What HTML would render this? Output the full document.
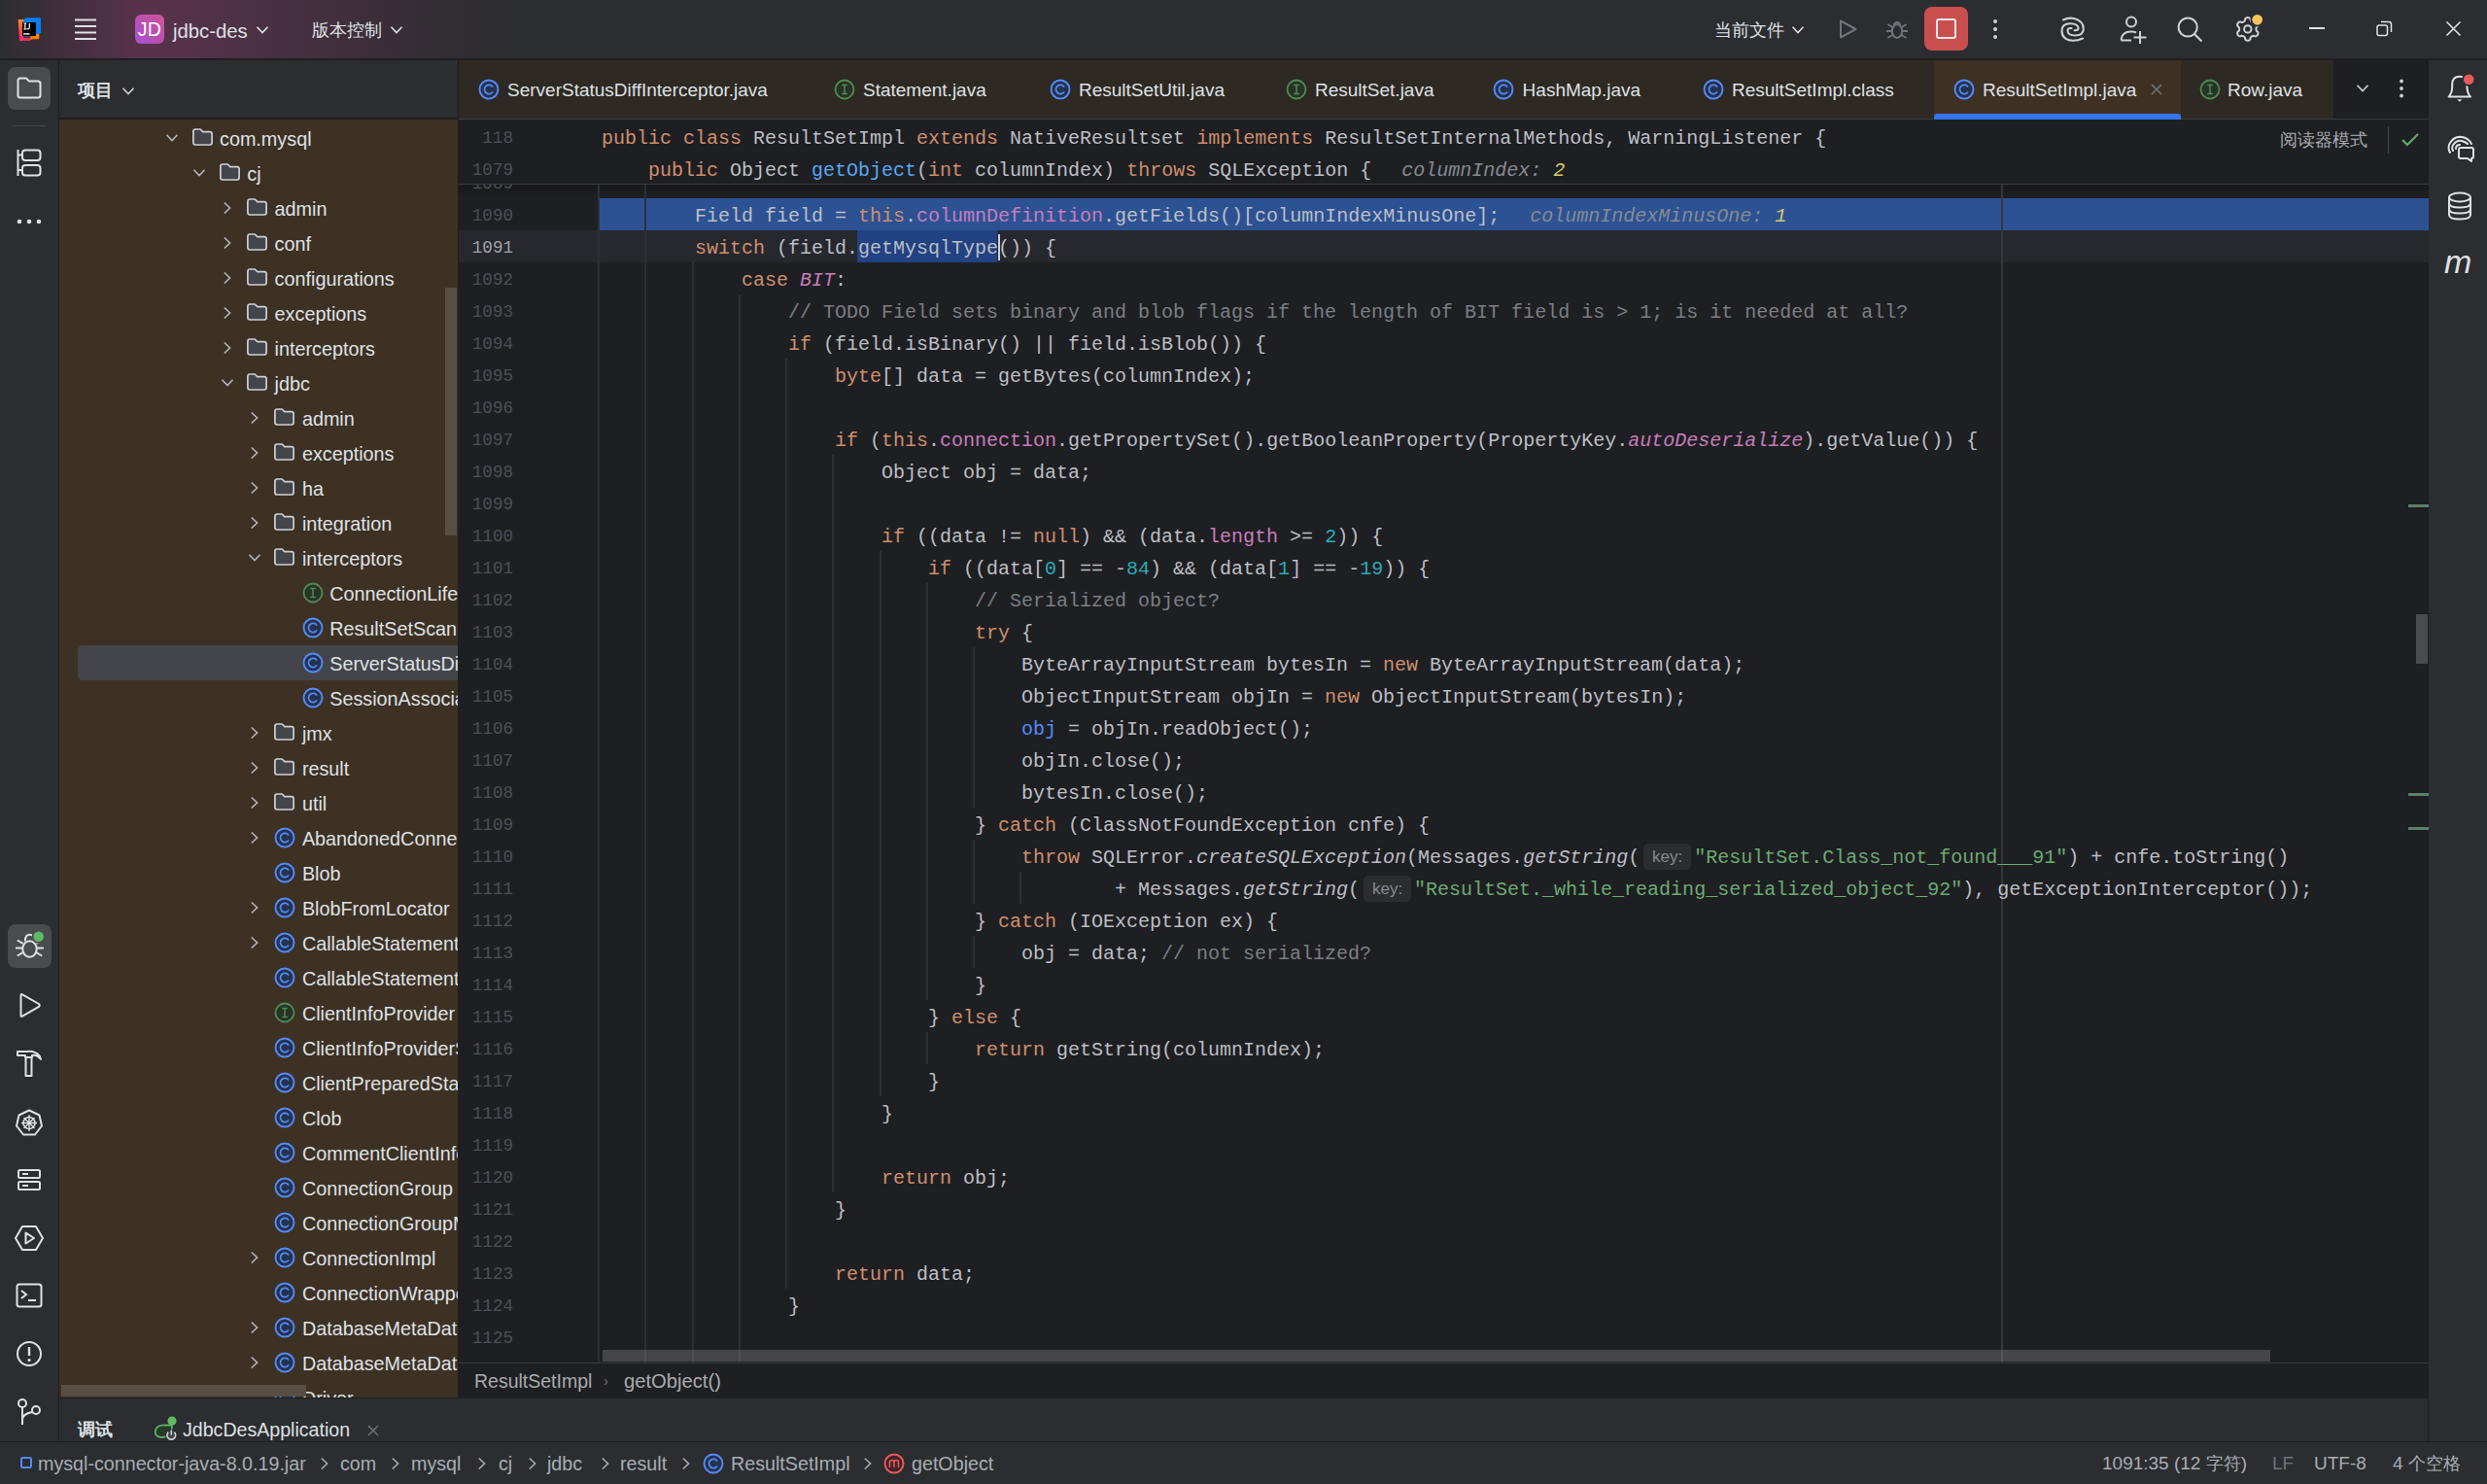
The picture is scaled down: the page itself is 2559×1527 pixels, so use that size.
<!DOCTYPE html><html><head><meta charset="utf-8"><style>
*{margin:0;padding:0;box-sizing:border-box}
html,body{width:2559px;height:1527px;overflow:hidden;background:#2b2d30}
svg{overflow:visible}
body{position:relative;font-family:"Liberation Sans",sans-serif}
.ui{font-family:"Liberation Sans",sans-serif;white-space:nowrap}
.cl{position:absolute;margin-left:1px;font-family:"Liberation Mono",monospace;font-size:20px;line-height:33px;height:33px;white-space:pre;color:#bcbec4;padding-top:2px}
.ln{position:absolute;left:472px;width:56px;text-align:right;font-family:"Liberation Mono",monospace;font-size:17.6px;line-height:33px;height:33px;color:#4b5059;padding-top:2px}
.ln.cur{color:#a1a3ab}
.k{color:#cf8e6d}.f{color:#c77dbb}.fi{color:#c77dbb;font-style:italic}.n{color:#2aacb8}.s{color:#6aab73}.c{color:#7a7e85}.m{color:#56a8f5}.i{font-style:italic}.b{color:#548af7}
.sel{}
.caret{display:inline-block;width:2px;height:27px;background:#ced0d6;vertical-align:-7px;margin-right:-2px}
.hint{display:inline-block;width:56px;height:27px;vertical-align:-7px;position:relative}
.hint span{position:absolute;left:4px;top:0;width:49px;height:27px;background:#2b2d30;border-radius:5px;font-family:"Liberation Sans",sans-serif;font-size:17px;line-height:27px;color:#878a90;text-align:center}
.inl{font-style:italic;color:#868a91;margin-left:31px}
.iv{color:#d5c86f}
</style></head><body><div style="position:absolute;left:0;top:0;width:2559px;height:60px;background:linear-gradient(90deg,#2c2d31 0px,#3f2f3b 60px,#58324a 145px,#55324a 190px,#4a3041 280px,#3c2e39 380px,#302d33 470px,#2b2d30 560px)"></div><div style="position:absolute;left:0;top:60px;width:2559px;height:2px;background:#1e1f22"></div><div style="position:absolute;left:472px;top:62px;width:2027px;height:1377px;background:#1e1f22"></div><div style="position:absolute;left:61px;top:123px;width:410px;height:1315px;background:#3d3124;overflow:hidden" ><div style="position:absolute;left:19px;top:541px;width:420px;height:36px;background:#43454a;border-radius:5px"></div><svg style="position:absolute;left:109.0px;top:14px" width="14" height="10" viewBox="0 0 14 10"><path d="M1.5 1.8 L7 7.6 L12.5 1.8" fill="none" stroke="#b4b6bb" stroke-width="1.6"/></svg><svg style="position:absolute;left:135.5px;top:8px" width="23" height="20" viewBox="0 0 23 20"><path d="M1.9 4.2 Q1.9 2 4.1 2 H9.2 L11.8 4.6 H18.9 Q21.1 4.6 21.1 6.8 V15.8 Q21.1 18 18.9 18 H4.1 Q1.9 18 1.9 15.8 Z" fill="#43454a" stroke="#ced0d6" stroke-width="1.7" stroke-linejoin="round"/></svg><div class="ui" style="position:absolute;left:165.0px;top:2px;font-size:19.8px;line-height:36px;color:#dfe1e5">com.mysql</div><svg style="position:absolute;left:137.3px;top:50px" width="14" height="10" viewBox="0 0 14 10"><path d="M1.5 1.8 L7 7.6 L12.5 1.8" fill="none" stroke="#b4b6bb" stroke-width="1.6"/></svg><svg style="position:absolute;left:163.8px;top:44px" width="23" height="20" viewBox="0 0 23 20"><path d="M1.9 4.2 Q1.9 2 4.1 2 H9.2 L11.8 4.6 H18.9 Q21.1 4.6 21.1 6.8 V15.8 Q21.1 18 18.9 18 H4.1 Q1.9 18 1.9 15.8 Z" fill="#43454a" stroke="#ced0d6" stroke-width="1.7" stroke-linejoin="round"/></svg><div class="ui" style="position:absolute;left:193.3px;top:38px;font-size:19.8px;line-height:36px;color:#dfe1e5">cj</div><svg style="position:absolute;left:167.6px;top:84px" width="10" height="14" viewBox="0 0 10 14"><path d="M1.8 1.5 L7.6 7 L1.8 12.5" fill="none" stroke="#b4b6bb" stroke-width="1.6"/></svg><svg style="position:absolute;left:192.1px;top:80px" width="23" height="20" viewBox="0 0 23 20"><path d="M1.9 4.2 Q1.9 2 4.1 2 H9.2 L11.8 4.6 H18.9 Q21.1 4.6 21.1 6.8 V15.8 Q21.1 18 18.9 18 H4.1 Q1.9 18 1.9 15.8 Z" fill="#43454a" stroke="#ced0d6" stroke-width="1.7" stroke-linejoin="round"/></svg><div class="ui" style="position:absolute;left:221.6px;top:74px;font-size:19.8px;line-height:36px;color:#dfe1e5">admin</div><svg style="position:absolute;left:167.6px;top:120px" width="10" height="14" viewBox="0 0 10 14"><path d="M1.8 1.5 L7.6 7 L1.8 12.5" fill="none" stroke="#b4b6bb" stroke-width="1.6"/></svg><svg style="position:absolute;left:192.1px;top:116px" width="23" height="20" viewBox="0 0 23 20"><path d="M1.9 4.2 Q1.9 2 4.1 2 H9.2 L11.8 4.6 H18.9 Q21.1 4.6 21.1 6.8 V15.8 Q21.1 18 18.9 18 H4.1 Q1.9 18 1.9 15.8 Z" fill="#43454a" stroke="#ced0d6" stroke-width="1.7" stroke-linejoin="round"/></svg><div class="ui" style="position:absolute;left:221.6px;top:110px;font-size:19.8px;line-height:36px;color:#dfe1e5">conf</div><svg style="position:absolute;left:167.6px;top:156px" width="10" height="14" viewBox="0 0 10 14"><path d="M1.8 1.5 L7.6 7 L1.8 12.5" fill="none" stroke="#b4b6bb" stroke-width="1.6"/></svg><svg style="position:absolute;left:192.1px;top:152px" width="23" height="20" viewBox="0 0 23 20"><path d="M1.9 4.2 Q1.9 2 4.1 2 H9.2 L11.8 4.6 H18.9 Q21.1 4.6 21.1 6.8 V15.8 Q21.1 18 18.9 18 H4.1 Q1.9 18 1.9 15.8 Z" fill="#43454a" stroke="#ced0d6" stroke-width="1.7" stroke-linejoin="round"/></svg><div class="ui" style="position:absolute;left:221.6px;top:146px;font-size:19.8px;line-height:36px;color:#dfe1e5">configurations</div><svg style="position:absolute;left:167.6px;top:192px" width="10" height="14" viewBox="0 0 10 14"><path d="M1.8 1.5 L7.6 7 L1.8 12.5" fill="none" stroke="#b4b6bb" stroke-width="1.6"/></svg><svg style="position:absolute;left:192.1px;top:188px" width="23" height="20" viewBox="0 0 23 20"><path d="M1.9 4.2 Q1.9 2 4.1 2 H9.2 L11.8 4.6 H18.9 Q21.1 4.6 21.1 6.8 V15.8 Q21.1 18 18.9 18 H4.1 Q1.9 18 1.9 15.8 Z" fill="#43454a" stroke="#ced0d6" stroke-width="1.7" stroke-linejoin="round"/></svg><div class="ui" style="position:absolute;left:221.6px;top:182px;font-size:19.8px;line-height:36px;color:#dfe1e5">exceptions</div><svg style="position:absolute;left:167.6px;top:228px" width="10" height="14" viewBox="0 0 10 14"><path d="M1.8 1.5 L7.6 7 L1.8 12.5" fill="none" stroke="#b4b6bb" stroke-width="1.6"/></svg><svg style="position:absolute;left:192.1px;top:224px" width="23" height="20" viewBox="0 0 23 20"><path d="M1.9 4.2 Q1.9 2 4.1 2 H9.2 L11.8 4.6 H18.9 Q21.1 4.6 21.1 6.8 V15.8 Q21.1 18 18.9 18 H4.1 Q1.9 18 1.9 15.8 Z" fill="#43454a" stroke="#ced0d6" stroke-width="1.7" stroke-linejoin="round"/></svg><div class="ui" style="position:absolute;left:221.6px;top:218px;font-size:19.8px;line-height:36px;color:#dfe1e5">interceptors</div><svg style="position:absolute;left:165.6px;top:266px" width="14" height="10" viewBox="0 0 14 10"><path d="M1.5 1.8 L7 7.6 L12.5 1.8" fill="none" stroke="#b4b6bb" stroke-width="1.6"/></svg><svg style="position:absolute;left:192.1px;top:260px" width="23" height="20" viewBox="0 0 23 20"><path d="M1.9 4.2 Q1.9 2 4.1 2 H9.2 L11.8 4.6 H18.9 Q21.1 4.6 21.1 6.8 V15.8 Q21.1 18 18.9 18 H4.1 Q1.9 18 1.9 15.8 Z" fill="#43454a" stroke="#ced0d6" stroke-width="1.7" stroke-linejoin="round"/></svg><div class="ui" style="position:absolute;left:221.6px;top:254px;font-size:19.8px;line-height:36px;color:#dfe1e5">jdbc</div><svg style="position:absolute;left:195.9px;top:300px" width="10" height="14" viewBox="0 0 10 14"><path d="M1.8 1.5 L7.6 7 L1.8 12.5" fill="none" stroke="#b4b6bb" stroke-width="1.6"/></svg><svg style="position:absolute;left:220.4px;top:296px" width="23" height="20" viewBox="0 0 23 20"><path d="M1.9 4.2 Q1.9 2 4.1 2 H9.2 L11.8 4.6 H18.9 Q21.1 4.6 21.1 6.8 V15.8 Q21.1 18 18.9 18 H4.1 Q1.9 18 1.9 15.8 Z" fill="#43454a" stroke="#ced0d6" stroke-width="1.7" stroke-linejoin="round"/></svg><div class="ui" style="position:absolute;left:249.9px;top:290px;font-size:19.8px;line-height:36px;color:#dfe1e5">admin</div><svg style="position:absolute;left:195.9px;top:336px" width="10" height="14" viewBox="0 0 10 14"><path d="M1.8 1.5 L7.6 7 L1.8 12.5" fill="none" stroke="#b4b6bb" stroke-width="1.6"/></svg><svg style="position:absolute;left:220.4px;top:332px" width="23" height="20" viewBox="0 0 23 20"><path d="M1.9 4.2 Q1.9 2 4.1 2 H9.2 L11.8 4.6 H18.9 Q21.1 4.6 21.1 6.8 V15.8 Q21.1 18 18.9 18 H4.1 Q1.9 18 1.9 15.8 Z" fill="#43454a" stroke="#ced0d6" stroke-width="1.7" stroke-linejoin="round"/></svg><div class="ui" style="position:absolute;left:249.9px;top:326px;font-size:19.8px;line-height:36px;color:#dfe1e5">exceptions</div><svg style="position:absolute;left:195.9px;top:372px" width="10" height="14" viewBox="0 0 10 14"><path d="M1.8 1.5 L7.6 7 L1.8 12.5" fill="none" stroke="#b4b6bb" stroke-width="1.6"/></svg><svg style="position:absolute;left:220.4px;top:368px" width="23" height="20" viewBox="0 0 23 20"><path d="M1.9 4.2 Q1.9 2 4.1 2 H9.2 L11.8 4.6 H18.9 Q21.1 4.6 21.1 6.8 V15.8 Q21.1 18 18.9 18 H4.1 Q1.9 18 1.9 15.8 Z" fill="#43454a" stroke="#ced0d6" stroke-width="1.7" stroke-linejoin="round"/></svg><div class="ui" style="position:absolute;left:249.9px;top:362px;font-size:19.8px;line-height:36px;color:#dfe1e5">ha</div><svg style="position:absolute;left:195.9px;top:408px" width="10" height="14" viewBox="0 0 10 14"><path d="M1.8 1.5 L7.6 7 L1.8 12.5" fill="none" stroke="#b4b6bb" stroke-width="1.6"/></svg><svg style="position:absolute;left:220.4px;top:404px" width="23" height="20" viewBox="0 0 23 20"><path d="M1.9 4.2 Q1.9 2 4.1 2 H9.2 L11.8 4.6 H18.9 Q21.1 4.6 21.1 6.8 V15.8 Q21.1 18 18.9 18 H4.1 Q1.9 18 1.9 15.8 Z" fill="#43454a" stroke="#ced0d6" stroke-width="1.7" stroke-linejoin="round"/></svg><div class="ui" style="position:absolute;left:249.9px;top:398px;font-size:19.8px;line-height:36px;color:#dfe1e5">integration</div><svg style="position:absolute;left:193.9px;top:446px" width="14" height="10" viewBox="0 0 14 10"><path d="M1.5 1.8 L7 7.6 L12.5 1.8" fill="none" stroke="#b4b6bb" stroke-width="1.6"/></svg><svg style="position:absolute;left:220.4px;top:440px" width="23" height="20" viewBox="0 0 23 20"><path d="M1.9 4.2 Q1.9 2 4.1 2 H9.2 L11.8 4.6 H18.9 Q21.1 4.6 21.1 6.8 V15.8 Q21.1 18 18.9 18 H4.1 Q1.9 18 1.9 15.8 Z" fill="#43454a" stroke="#ced0d6" stroke-width="1.7" stroke-linejoin="round"/></svg><div class="ui" style="position:absolute;left:249.9px;top:434px;font-size:19.8px;line-height:36px;color:#dfe1e5">interceptors</div><svg style="position:absolute;left:249.7px;top:476px" width="22" height="22" viewBox="0 0 22 22"><circle cx="11" cy="11" r="9.5" fill="#273325" stroke="#4f8b53" stroke-width="1.8"/><path d="M8.2 6.5 H13.8 M11 6.5 V15.5 M8.2 15.5 H13.8" fill="none" stroke="#4f8b53" stroke-width="1.5"/></svg><div class="ui" style="position:absolute;left:278.2px;top:470px;font-size:19.8px;line-height:36px;color:#dfe1e5">ConnectionLifecycleInterceptor</div><svg style="position:absolute;left:249.7px;top:512px" width="22" height="22" viewBox="0 0 22 22"><circle cx="11" cy="11" r="9.5" fill="#25324d" stroke="#548af7" stroke-width="1.9"/><path d="M15 8.6 A4.6 4.6 0 1 0 15 13.4" fill="none" stroke="#548af7" stroke-width="1.7"/></svg><div class="ui" style="position:absolute;left:278.2px;top:506px;font-size:19.8px;line-height:36px;color:#dfe1e5">ResultSetScannerInterceptor</div><svg style="position:absolute;left:249.7px;top:548px" width="22" height="22" viewBox="0 0 22 22"><circle cx="11" cy="11" r="9.5" fill="#25324d" stroke="#548af7" stroke-width="1.9"/><path d="M15 8.6 A4.6 4.6 0 1 0 15 13.4" fill="none" stroke="#548af7" stroke-width="1.7"/></svg><div class="ui" style="position:absolute;left:278.2px;top:542px;font-size:19.8px;line-height:36px;color:#dfe1e5">ServerStatusDiffInterceptor</div><svg style="position:absolute;left:249.7px;top:584px" width="22" height="22" viewBox="0 0 22 22"><circle cx="11" cy="11" r="9.5" fill="#25324d" stroke="#548af7" stroke-width="1.9"/><path d="M15 8.6 A4.6 4.6 0 1 0 15 13.4" fill="none" stroke="#548af7" stroke-width="1.7"/></svg><div class="ui" style="position:absolute;left:278.2px;top:578px;font-size:19.8px;line-height:36px;color:#dfe1e5">SessionAssociationInterceptor</div><svg style="position:absolute;left:195.9px;top:624px" width="10" height="14" viewBox="0 0 10 14"><path d="M1.8 1.5 L7.6 7 L1.8 12.5" fill="none" stroke="#b4b6bb" stroke-width="1.6"/></svg><svg style="position:absolute;left:220.4px;top:620px" width="23" height="20" viewBox="0 0 23 20"><path d="M1.9 4.2 Q1.9 2 4.1 2 H9.2 L11.8 4.6 H18.9 Q21.1 4.6 21.1 6.8 V15.8 Q21.1 18 18.9 18 H4.1 Q1.9 18 1.9 15.8 Z" fill="#43454a" stroke="#ced0d6" stroke-width="1.7" stroke-linejoin="round"/></svg><div class="ui" style="position:absolute;left:249.9px;top:614px;font-size:19.8px;line-height:36px;color:#dfe1e5">jmx</div><svg style="position:absolute;left:195.9px;top:660px" width="10" height="14" viewBox="0 0 10 14"><path d="M1.8 1.5 L7.6 7 L1.8 12.5" fill="none" stroke="#b4b6bb" stroke-width="1.6"/></svg><svg style="position:absolute;left:220.4px;top:656px" width="23" height="20" viewBox="0 0 23 20"><path d="M1.9 4.2 Q1.9 2 4.1 2 H9.2 L11.8 4.6 H18.9 Q21.1 4.6 21.1 6.8 V15.8 Q21.1 18 18.9 18 H4.1 Q1.9 18 1.9 15.8 Z" fill="#43454a" stroke="#ced0d6" stroke-width="1.7" stroke-linejoin="round"/></svg><div class="ui" style="position:absolute;left:249.9px;top:650px;font-size:19.8px;line-height:36px;color:#dfe1e5">result</div><svg style="position:absolute;left:195.9px;top:696px" width="10" height="14" viewBox="0 0 10 14"><path d="M1.8 1.5 L7.6 7 L1.8 12.5" fill="none" stroke="#b4b6bb" stroke-width="1.6"/></svg><svg style="position:absolute;left:220.4px;top:692px" width="23" height="20" viewBox="0 0 23 20"><path d="M1.9 4.2 Q1.9 2 4.1 2 H9.2 L11.8 4.6 H18.9 Q21.1 4.6 21.1 6.8 V15.8 Q21.1 18 18.9 18 H4.1 Q1.9 18 1.9 15.8 Z" fill="#43454a" stroke="#ced0d6" stroke-width="1.7" stroke-linejoin="round"/></svg><div class="ui" style="position:absolute;left:249.9px;top:686px;font-size:19.8px;line-height:36px;color:#dfe1e5">util</div><svg style="position:absolute;left:195.9px;top:732px" width="10" height="14" viewBox="0 0 10 14"><path d="M1.8 1.5 L7.6 7 L1.8 12.5" fill="none" stroke="#b4b6bb" stroke-width="1.6"/></svg><svg style="position:absolute;left:221.4px;top:728px" width="22" height="22" viewBox="0 0 22 22"><circle cx="11" cy="11" r="9.5" fill="#25324d" stroke="#548af7" stroke-width="1.9"/><path d="M15 8.6 A4.6 4.6 0 1 0 15 13.4" fill="none" stroke="#548af7" stroke-width="1.7"/></svg><div class="ui" style="position:absolute;left:249.9px;top:722px;font-size:19.8px;line-height:36px;color:#dfe1e5">AbandonedConnectionCleanupThread</div><svg style="position:absolute;left:221.4px;top:764px" width="22" height="22" viewBox="0 0 22 22"><circle cx="11" cy="11" r="9.5" fill="#25324d" stroke="#548af7" stroke-width="1.9"/><path d="M15 8.6 A4.6 4.6 0 1 0 15 13.4" fill="none" stroke="#548af7" stroke-width="1.7"/></svg><div class="ui" style="position:absolute;left:249.9px;top:758px;font-size:19.8px;line-height:36px;color:#dfe1e5">Blob</div><svg style="position:absolute;left:195.9px;top:804px" width="10" height="14" viewBox="0 0 10 14"><path d="M1.8 1.5 L7.6 7 L1.8 12.5" fill="none" stroke="#b4b6bb" stroke-width="1.6"/></svg><svg style="position:absolute;left:221.4px;top:800px" width="22" height="22" viewBox="0 0 22 22"><circle cx="11" cy="11" r="9.5" fill="#25324d" stroke="#548af7" stroke-width="1.9"/><path d="M15 8.6 A4.6 4.6 0 1 0 15 13.4" fill="none" stroke="#548af7" stroke-width="1.7"/></svg><div class="ui" style="position:absolute;left:249.9px;top:794px;font-size:19.8px;line-height:36px;color:#dfe1e5">BlobFromLocator</div><svg style="position:absolute;left:195.9px;top:840px" width="10" height="14" viewBox="0 0 10 14"><path d="M1.8 1.5 L7.6 7 L1.8 12.5" fill="none" stroke="#b4b6bb" stroke-width="1.6"/></svg><svg style="position:absolute;left:221.4px;top:836px" width="22" height="22" viewBox="0 0 22 22"><circle cx="11" cy="11" r="9.5" fill="#25324d" stroke="#548af7" stroke-width="1.9"/><path d="M15 8.6 A4.6 4.6 0 1 0 15 13.4" fill="none" stroke="#548af7" stroke-width="1.7"/></svg><div class="ui" style="position:absolute;left:249.9px;top:830px;font-size:19.8px;line-height:36px;color:#dfe1e5">CallableStatement</div><svg style="position:absolute;left:221.4px;top:872px" width="22" height="22" viewBox="0 0 22 22"><circle cx="11" cy="11" r="9.5" fill="#25324d" stroke="#548af7" stroke-width="1.9"/><path d="M15 8.6 A4.6 4.6 0 1 0 15 13.4" fill="none" stroke="#548af7" stroke-width="1.7"/></svg><div class="ui" style="position:absolute;left:249.9px;top:866px;font-size:19.8px;line-height:36px;color:#dfe1e5">CallableStatementWrapper</div><svg style="position:absolute;left:221.4px;top:908px" width="22" height="22" viewBox="0 0 22 22"><circle cx="11" cy="11" r="9.5" fill="#273325" stroke="#4f8b53" stroke-width="1.8"/><path d="M8.2 6.5 H13.8 M11 6.5 V15.5 M8.2 15.5 H13.8" fill="none" stroke="#4f8b53" stroke-width="1.5"/></svg><div class="ui" style="position:absolute;left:249.9px;top:902px;font-size:19.8px;line-height:36px;color:#dfe1e5">ClientInfoProvider</div><svg style="position:absolute;left:221.4px;top:944px" width="22" height="22" viewBox="0 0 22 22"><circle cx="11" cy="11" r="9.5" fill="#25324d" stroke="#548af7" stroke-width="1.9"/><path d="M15 8.6 A4.6 4.6 0 1 0 15 13.4" fill="none" stroke="#548af7" stroke-width="1.7"/></svg><div class="ui" style="position:absolute;left:249.9px;top:938px;font-size:19.8px;line-height:36px;color:#dfe1e5">ClientInfoProviderSP</div><svg style="position:absolute;left:221.4px;top:980px" width="22" height="22" viewBox="0 0 22 22"><circle cx="11" cy="11" r="9.5" fill="#25324d" stroke="#548af7" stroke-width="1.9"/><path d="M15 8.6 A4.6 4.6 0 1 0 15 13.4" fill="none" stroke="#548af7" stroke-width="1.7"/></svg><div class="ui" style="position:absolute;left:249.9px;top:974px;font-size:19.8px;line-height:36px;color:#dfe1e5">ClientPreparedStatement</div><svg style="position:absolute;left:221.4px;top:1016px" width="22" height="22" viewBox="0 0 22 22"><circle cx="11" cy="11" r="9.5" fill="#25324d" stroke="#548af7" stroke-width="1.9"/><path d="M15 8.6 A4.6 4.6 0 1 0 15 13.4" fill="none" stroke="#548af7" stroke-width="1.7"/></svg><div class="ui" style="position:absolute;left:249.9px;top:1010px;font-size:19.8px;line-height:36px;color:#dfe1e5">Clob</div><svg style="position:absolute;left:221.4px;top:1052px" width="22" height="22" viewBox="0 0 22 22"><circle cx="11" cy="11" r="9.5" fill="#25324d" stroke="#548af7" stroke-width="1.9"/><path d="M15 8.6 A4.6 4.6 0 1 0 15 13.4" fill="none" stroke="#548af7" stroke-width="1.7"/></svg><div class="ui" style="position:absolute;left:249.9px;top:1046px;font-size:19.8px;line-height:36px;color:#dfe1e5">CommentClientInfoProvider</div><svg style="position:absolute;left:221.4px;top:1088px" width="22" height="22" viewBox="0 0 22 22"><circle cx="11" cy="11" r="9.5" fill="#25324d" stroke="#548af7" stroke-width="1.9"/><path d="M15 8.6 A4.6 4.6 0 1 0 15 13.4" fill="none" stroke="#548af7" stroke-width="1.7"/></svg><div class="ui" style="position:absolute;left:249.9px;top:1082px;font-size:19.8px;line-height:36px;color:#dfe1e5">ConnectionGroup</div><svg style="position:absolute;left:221.4px;top:1124px" width="22" height="22" viewBox="0 0 22 22"><circle cx="11" cy="11" r="9.5" fill="#25324d" stroke="#548af7" stroke-width="1.9"/><path d="M15 8.6 A4.6 4.6 0 1 0 15 13.4" fill="none" stroke="#548af7" stroke-width="1.7"/></svg><div class="ui" style="position:absolute;left:249.9px;top:1118px;font-size:19.8px;line-height:36px;color:#dfe1e5">ConnectionGroupManager</div><svg style="position:absolute;left:195.9px;top:1164px" width="10" height="14" viewBox="0 0 10 14"><path d="M1.8 1.5 L7.6 7 L1.8 12.5" fill="none" stroke="#b4b6bb" stroke-width="1.6"/></svg><svg style="position:absolute;left:221.4px;top:1160px" width="22" height="22" viewBox="0 0 22 22"><circle cx="11" cy="11" r="9.5" fill="#25324d" stroke="#548af7" stroke-width="1.9"/><path d="M15 8.6 A4.6 4.6 0 1 0 15 13.4" fill="none" stroke="#548af7" stroke-width="1.7"/></svg><div class="ui" style="position:absolute;left:249.9px;top:1154px;font-size:19.8px;line-height:36px;color:#dfe1e5">ConnectionImpl</div><svg style="position:absolute;left:221.4px;top:1196px" width="22" height="22" viewBox="0 0 22 22"><circle cx="11" cy="11" r="9.5" fill="#25324d" stroke="#548af7" stroke-width="1.9"/><path d="M15 8.6 A4.6 4.6 0 1 0 15 13.4" fill="none" stroke="#548af7" stroke-width="1.7"/></svg><div class="ui" style="position:absolute;left:249.9px;top:1190px;font-size:19.8px;line-height:36px;color:#dfe1e5">ConnectionWrapper</div><svg style="position:absolute;left:195.9px;top:1236px" width="10" height="14" viewBox="0 0 10 14"><path d="M1.8 1.5 L7.6 7 L1.8 12.5" fill="none" stroke="#b4b6bb" stroke-width="1.6"/></svg><svg style="position:absolute;left:221.4px;top:1232px" width="22" height="22" viewBox="0 0 22 22"><circle cx="11" cy="11" r="9.5" fill="#25324d" stroke="#548af7" stroke-width="1.9"/><path d="M15 8.6 A4.6 4.6 0 1 0 15 13.4" fill="none" stroke="#548af7" stroke-width="1.7"/></svg><div class="ui" style="position:absolute;left:249.9px;top:1226px;font-size:19.8px;line-height:36px;color:#dfe1e5">DatabaseMetaData</div><svg style="position:absolute;left:195.9px;top:1272px" width="10" height="14" viewBox="0 0 10 14"><path d="M1.8 1.5 L7.6 7 L1.8 12.5" fill="none" stroke="#b4b6bb" stroke-width="1.6"/></svg><svg style="position:absolute;left:221.4px;top:1268px" width="22" height="22" viewBox="0 0 22 22"><circle cx="11" cy="11" r="9.5" fill="#25324d" stroke="#548af7" stroke-width="1.9"/><path d="M15 8.6 A4.6 4.6 0 1 0 15 13.4" fill="none" stroke="#548af7" stroke-width="1.7"/></svg><div class="ui" style="position:absolute;left:249.9px;top:1262px;font-size:19.8px;line-height:36px;color:#dfe1e5">DatabaseMetaDataUsingInfoSchema</div><svg style="position:absolute;left:221.4px;top:1304px" width="22" height="22" viewBox="0 0 22 22"><circle cx="11" cy="11" r="9.5" fill="#25324d" stroke="#548af7" stroke-width="1.9"/><path d="M15 8.6 A4.6 4.6 0 1 0 15 13.4" fill="none" stroke="#548af7" stroke-width="1.7"/></svg><div class="ui" style="position:absolute;left:249.9px;top:1298px;font-size:19.8px;line-height:36px;color:#dfe1e5">Driver</div><div style="position:absolute;left:397px;top:173px;width:12px;height:255px;background:#584e43"></div><div style="position:absolute;left:2px;top:1302px;width:252px;height:12px;background:#584e43"></div></div><div style="position:absolute;left:60px;top:62px;width:1px;height:1421px;background:#1e1f22"></div><div style="position:absolute;left:471px;top:62px;width:1px;height:1376px;background:#1e1f22"></div><div style="position:absolute;left:61px;top:121px;width:410px;height:2px;background:#1e1f22"></div><div style="position:absolute;left:2498px;top:62px;width:1px;height:1421px;background:#1e1f22"></div><div style="position:absolute;left:61px;top:1438px;width:2438px;height:1px;background:#1e1f22"></div><div style="position:absolute;left:0;top:1483px;width:2559px;height:1px;background:#1e1f22"></div><div style="position:absolute;left:0;top:0;width:2559px;height:1527px"><div style="position:absolute;left:472px;top:237px;width:2027px;height:33px;background:#26282e"></div><div style="position:absolute;left:617px;top:204px;width:1882px;height:33px;background:#2c5294"></div><div style="position:absolute;left:472px;top:190px;width:2027px;height:14px;background:linear-gradient(#19191c,#1e1f22)"></div><div style="position:absolute;left:615.00px;top:190px;width:2px;height:1212px;background:#2c2f33"></div><div style="position:absolute;left:663.25px;top:190px;width:2px;height:1212px;background:#2c2f33"></div><div style="position:absolute;left:711.50px;top:270px;width:2px;height:1132px;background:#2c2f33"></div><div style="position:absolute;left:759.75px;top:303px;width:2px;height:1099px;background:#2c2f33"></div><div style="position:absolute;left:808.00px;top:369px;width:2px;height:957px;background:#2c2f33"></div><div style="position:absolute;left:856.25px;top:468px;width:2px;height:759px;background:#2c2f33"></div><div style="position:absolute;left:904.50px;top:567px;width:2px;height:561px;background:#2c2f33"></div><div style="position:absolute;left:952.75px;top:600px;width:2px;height:429px;background:#2c2f33"></div><div style="position:absolute;left:952.75px;top:1062px;width:2px;height:33px;background:#2c2f33"></div><div style="position:absolute;left:1001.00px;top:666px;width:2px;height:165px;background:#2c2f33"></div><div style="position:absolute;left:1001.00px;top:864px;width:2px;height:66px;background:#2c2f33"></div><div style="position:absolute;left:1001.00px;top:963px;width:2px;height:33px;background:#2c2f33"></div><div style="position:absolute;left:1049.25px;top:897px;width:2px;height:33px;background:#2c2f33"></div><div style="position:absolute;left:2059px;top:190px;width:2px;height:1212px;background:#35373c"></div><div class="ln" style="top:171px">1089</div><div class="ln" style="top:204px">1090</div><div class="ln cur" style="top:237px">1091</div><div class="ln" style="top:270px">1092</div><div class="ln" style="top:303px">1093</div><div class="ln" style="top:336px">1094</div><div class="ln" style="top:369px">1095</div><div class="ln" style="top:402px">1096</div><div class="ln" style="top:435px">1097</div><div class="ln" style="top:468px">1098</div><div class="ln" style="top:501px">1099</div><div class="ln" style="top:534px">1100</div><div class="ln" style="top:567px">1101</div><div class="ln" style="top:600px">1102</div><div class="ln" style="top:633px">1103</div><div class="ln" style="top:666px">1104</div><div class="ln" style="top:699px">1105</div><div class="ln" style="top:732px">1106</div><div class="ln" style="top:765px">1107</div><div class="ln" style="top:798px">1108</div><div class="ln" style="top:831px">1109</div><div class="ln" style="top:864px">1110</div><div class="ln" style="top:897px">1111</div><div class="ln" style="top:930px">1112</div><div class="ln" style="top:963px">1113</div><div class="ln" style="top:996px">1114</div><div class="ln" style="top:1029px">1115</div><div class="ln" style="top:1062px">1116</div><div class="ln" style="top:1095px">1117</div><div class="ln" style="top:1128px">1118</div><div class="ln" style="top:1161px">1119</div><div class="ln" style="top:1194px">1120</div><div class="ln" style="top:1227px">1121</div><div class="ln" style="top:1260px">1122</div><div class="ln" style="top:1293px">1123</div><div class="ln" style="top:1326px">1124</div><div class="ln" style="top:1359px">1125</div><div style="position:absolute;left:882px;top:237px;width:144px;height:33px;background:#214283"></div><div class="cl" style="top:204px;left:714px">Field field = <span class="k">this</span>.<span class="f">columnDefinition</span>.getFields()[columnIndexMinusOne];<span class="inl">columnIndexMinusOne: <span class="iv">1</span></span></div><div class="cl" style="top:237px;left:714px"><span class="k">switch</span> (field.<span class="sel">getMysqlType</span><span class="caret"></span>()) {</div><div class="cl" style="top:270px;left:762px"><span class="k">case</span> <span class="fi">BIT</span>:</div><div class="cl" style="top:303px;left:810px"><span class="c">// TODO Field sets binary and blob flags if the length of BIT field is &gt; 1; is it needed at all?</span></div><div class="cl" style="top:336px;left:810px"><span class="k">if</span> (field.isBinary() || field.isBlob()) {</div><div class="cl" style="top:369px;left:858px"><span class="k">byte</span>[] data = getBytes(columnIndex);</div><div class="cl" style="top:435px;left:858px"><span class="k">if</span> (<span class="k">this</span>.<span class="f">connection</span>.getPropertySet().getBooleanProperty(PropertyKey.<span class="fi">autoDeserialize</span>).getValue()) {</div><div class="cl" style="top:468px;left:906px">Object obj = data;</div><div class="cl" style="top:534px;left:906px"><span class="k">if</span> ((data != <span class="k">null</span>) &amp;&amp; (data.<span class="f">length</span> &gt;= <span class="n">2</span>)) {</div><div class="cl" style="top:567px;left:954px"><span class="k">if</span> ((data[<span class="n">0</span>] == -<span class="n">84</span>) &amp;&amp; (data[<span class="n">1</span>] == -<span class="n">19</span>)) {</div><div class="cl" style="top:600px;left:1002px"><span class="c">// Serialized object?</span></div><div class="cl" style="top:633px;left:1002px"><span class="k">try</span> {</div><div class="cl" style="top:666px;left:1050px">ByteArrayInputStream bytesIn = <span class="k">new</span> ByteArrayInputStream(data);</div><div class="cl" style="top:699px;left:1050px">ObjectInputStream objIn = <span class="k">new</span> ObjectInputStream(bytesIn);</div><div class="cl" style="top:732px;left:1050px"><span class="b">obj</span> = objIn.readObject();</div><div class="cl" style="top:765px;left:1050px">objIn.close();</div><div class="cl" style="top:798px;left:1050px">bytesIn.close();</div><div class="cl" style="top:831px;left:1002px">} <span class="k">catch</span> (ClassNotFoundException cnfe) {</div><div class="cl" style="top:864px;left:1050px"><span class="k">throw</span> SQLError.<span class="i">createSQLException</span>(Messages.<span class="i">getString</span>(<span class="hint"><span>key:</span></span><span class="s">"ResultSet.Class_not_found___91"</span>) + cnfe.toString()</div><div class="cl" style="top:897px;left:1146px">+ Messages.<span class="i">getString</span>(<span class="hint"><span>key:</span></span><span class="s">"ResultSet._while_reading_serialized_object_92"</span>), getExceptionInterceptor());</div><div class="cl" style="top:930px;left:1002px">} <span class="k">catch</span> (IOException ex) {</div><div class="cl" style="top:963px;left:1050px">obj = data; <span class="c">// not serialized?</span></div><div class="cl" style="top:996px;left:1002px">}</div><div class="cl" style="top:1029px;left:954px">} <span class="k">else</span> {</div><div class="cl" style="top:1062px;left:1002px"><span class="k">return</span> getString(columnIndex);</div><div class="cl" style="top:1095px;left:954px">}</div><div class="cl" style="top:1128px;left:906px">}</div><div class="cl" style="top:1194px;left:906px"><span class="k">return</span> obj;</div><div class="cl" style="top:1227px;left:858px">}</div><div class="cl" style="top:1293px;left:858px"><span class="k">return</span> data;</div><div class="cl" style="top:1326px;left:810px">}</div><div style="position:absolute;left:472px;top:123px;width:2027px;height:66px;background:#1e1f22"></div><div style="position:absolute;left:472px;top:189px;width:2027px;height:1px;background:#393b40"></div><div class="ln" style="top:124px">118</div><div class="ln" style="top:157px">1079</div><div class="cl" style="top:124px;left:618px"><span class="k">public</span> <span class="k">class</span> ResultSetImpl <span class="k">extends</span> NativeResultset <span class="k">implements</span> ResultSetInternalMethods, WarningListener {</div><div class="cl" style="top:157px;left:666px"><span class="k">public</span> Object <span class="m">getObject</span>(<span class="k">int</span> columnIndex) <span class="k">throws</span> SQLException {<span class="inl">columnIndex: <span class="iv">2</span></span></div><div class="ui" style="position:absolute;left:2346px;top:130px;font-size:17.75px;color:#a8abb0;line-height:28px">阅读器模式</div><div style="position:absolute;left:2457px;top:130px;width:1px;height:28px;background:#43454a"></div><svg style="position:absolute;left:2470px;top:134px" width="20" height="20" viewBox="0 0 20 20"><path d="M2 10 L7 15 L18 4" fill="none" stroke="#5fad65" stroke-width="2.2"/></svg><div style="position:absolute;left:2478px;top:519px;width:21px;height:3px;background:#5b8069"></div><div style="position:absolute;left:2478px;top:816px;width:21px;height:3px;background:#5b8069"></div><div style="position:absolute;left:2478px;top:851px;width:21px;height:3px;background:#5b8069"></div><div style="position:absolute;left:2486px;top:632px;width:12px;height:51px;background:#4a4b4e"></div><div style="position:absolute;left:620px;top:1389px;width:1716px;height:12px;background:rgba(130,131,135,0.4)"></div><div style="position:absolute;left:472px;top:1402px;width:2027px;height:1px;background:#393b40"></div><div class="ui" style="position:absolute;left:488px;top:1403px;line-height:36px;font-size:19.5px;color:#a9abb0">ResultSetImpl</div><div class="ui" style="position:absolute;left:621px;top:1403px;line-height:36px;font-size:15px;color:#6f737a">›</div><div class="ui" style="position:absolute;left:642px;top:1403px;line-height:36px;font-size:20.2px;color:#a9abb0">getObject()</div></div><div class="ui" style="position:absolute;left:80px;top:79px;font-size:17.75px;line-height:28px;font-weight:bold;color:#dfe1e5">项目</div><svg style="position:absolute;left:125px;top:89px" width="14" height="10" viewBox="0 0 14 10"><path d="M1.5 1.8 L7 7.6 L12.5 1.8" fill="none" stroke="#ced0d6" stroke-width="1.6"/></svg><div style="position:absolute;left:472px;top:62px;width:1929px;height:60px;background:#2e2922"></div><div style="position:absolute;left:1990px;top:62px;width:254px;height:60px;background:#3d3124"></div><div style="position:absolute;left:1990px;top:117px;width:254px;height:6px;background:#3574f0;border-radius:3px 3px 0 0"></div><div style="position:absolute;left:472px;top:122px;width:1518px;height:1px;background:#393b40"></div><div style="position:absolute;left:2244px;top:122px;width:255px;height:1px;background:#393b40"></div><svg style="position:absolute;left:491.5px;top:81px" width="22" height="22" viewBox="0 0 22 22"><circle cx="11" cy="11" r="9.5" fill="#25324d" stroke="#548af7" stroke-width="1.9"/><path d="M15 8.6 A4.6 4.6 0 1 0 15 13.4" fill="none" stroke="#548af7" stroke-width="1.7"/></svg><div class="ui" style="position:absolute;left:522px;top:79px;font-size:19px;line-height:28px;color:#dfe1e5">ServerStatusDiffInterceptor.java</div><svg style="position:absolute;left:858.0px;top:81px" width="22" height="22" viewBox="0 0 22 22"><circle cx="11" cy="11" r="9.5" fill="#273325" stroke="#4f8b53" stroke-width="1.8"/><path d="M8.2 6.5 H13.8 M11 6.5 V15.5 M8.2 15.5 H13.8" fill="none" stroke="#4f8b53" stroke-width="1.5"/></svg><div class="ui" style="position:absolute;left:888px;top:79px;font-size:19px;line-height:28px;color:#dfe1e5">Statement.java</div><svg style="position:absolute;left:1079.9px;top:81px" width="22" height="22" viewBox="0 0 22 22"><circle cx="11" cy="11" r="9.5" fill="#25324d" stroke="#548af7" stroke-width="1.9"/><path d="M15 8.6 A4.6 4.6 0 1 0 15 13.4" fill="none" stroke="#548af7" stroke-width="1.7"/></svg><div class="ui" style="position:absolute;left:1110px;top:79px;font-size:19px;line-height:28px;color:#dfe1e5">ResultSetUtil.java</div><svg style="position:absolute;left:1322.9px;top:81px" width="22" height="22" viewBox="0 0 22 22"><circle cx="11" cy="11" r="9.5" fill="#273325" stroke="#4f8b53" stroke-width="1.8"/><path d="M8.2 6.5 H13.8 M11 6.5 V15.5 M8.2 15.5 H13.8" fill="none" stroke="#4f8b53" stroke-width="1.5"/></svg><div class="ui" style="position:absolute;left:1353px;top:79px;font-size:19px;line-height:28px;color:#dfe1e5">ResultSet.java</div><svg style="position:absolute;left:1535.5px;top:81px" width="22" height="22" viewBox="0 0 22 22"><circle cx="11" cy="11" r="9.5" fill="#25324d" stroke="#548af7" stroke-width="1.9"/><path d="M15 8.6 A4.6 4.6 0 1 0 15 13.4" fill="none" stroke="#548af7" stroke-width="1.7"/></svg><div class="ui" style="position:absolute;left:1566.6px;top:79px;font-size:19px;line-height:28px;color:#dfe1e5">HashMap.java</div><svg style="position:absolute;left:1752.0px;top:81px" width="22" height="22" viewBox="0 0 22 22"><circle cx="11" cy="11" r="9.5" fill="#25324d" stroke="#548af7" stroke-width="1.9"/><path d="M15 8.6 A4.6 4.6 0 1 0 15 13.4" fill="none" stroke="#548af7" stroke-width="1.7"/></svg><div class="ui" style="position:absolute;left:1782px;top:79px;font-size:19px;line-height:28px;color:#dfe1e5">ResultSetImpl.class</div><svg style="position:absolute;left:2009.5px;top:81px" width="22" height="22" viewBox="0 0 22 22"><circle cx="11" cy="11" r="9.5" fill="#25324d" stroke="#548af7" stroke-width="1.9"/><path d="M15 8.6 A4.6 4.6 0 1 0 15 13.4" fill="none" stroke="#548af7" stroke-width="1.7"/></svg><div class="ui" style="position:absolute;left:2040px;top:79px;font-size:19px;line-height:28px;color:#dfe1e5">ResultSetImpl.java</div><svg style="position:absolute;left:2262.5px;top:81px" width="22" height="22" viewBox="0 0 22 22"><circle cx="11" cy="11" r="9.5" fill="#273325" stroke="#4f8b53" stroke-width="1.8"/><path d="M8.2 6.5 H13.8 M11 6.5 V15.5 M8.2 15.5 H13.8" fill="none" stroke="#4f8b53" stroke-width="1.5"/></svg><div class="ui" style="position:absolute;left:2292px;top:79px;font-size:19px;line-height:28px;color:#dfe1e5">Row.java</div><svg style="position:absolute;left:2212px;top:85px" width="14" height="14" viewBox="0 0 14 14"><path d="M2 2 L12 12 M12 2 L2 12" stroke="#6f737a" stroke-width="1.5"/></svg><svg style="position:absolute;left:2424px;top:86px" width="16" height="10" viewBox="0 0 16 10"><path d="M1.5 1.8 L7 7.6 L12.5 1.8" fill="none" stroke="#ced0d6" stroke-width="1.6"/></svg><svg style="position:absolute;left:2466px;top:80px" width="10" height="22" viewBox="0 0 10 22"><circle cx="5" cy="3.5" r="1.9" fill="#ced0d6"/><circle cx="5" cy="11" r="1.9" fill="#ced0d6"/><circle cx="5" cy="18.5" r="1.9" fill="#ced0d6"/></svg><svg style="position:absolute;left:18px;top:18px" width="24" height="24" viewBox="0 0 24 24"><defs><linearGradient id="lg1" x1="0" y1="0" x2="0" y2="1"><stop offset="0" stop-color="#ff8a17"/><stop offset="0.55" stop-color="#ff4a55"/><stop offset="0.8" stop-color="#ff2d5e"/></linearGradient><linearGradient id="lg2" x1="0" y1="1" x2="1" y2="0"><stop offset="0" stop-color="#6a5bd8"/><stop offset="0.45" stop-color="#087cfa"/></linearGradient></defs><path d="M0.6 2.8 Q0.6 2 1.4 2 H8 L6 23.9 H3 Q2.2 23.9 2.1 23 Z" fill="url(#lg1)"/><path d="M2 21 L18 21 L12 23.9 H2.2 Z" fill="#ff2d5e"/><path d="M8.6 0.2 H23 Q24 0.2 24 1.2 V15.5 L18.5 19.5 H5 V5 Z" fill="url(#lg2)"/><path d="M15 17 H22.3 V21.5 Q22.3 22.3 21.5 22.3 H12.5 Z" fill="#ff8100"/><rect x="5" y="5" width="14" height="14" fill="#000"/><path d="M6.4 6.2 H9.3 M7.85 6.2 V11.8 M6.4 11.8 H9.3 M12.3 5.9 V10.6 Q12.3 11.8 11 11.8 H9.6" fill="none" stroke="#e8e8e8" stroke-width="1.3"/><rect x="6.2" y="16" width="6.3" height="1.8" fill="#c8c8c8"/></svg><svg style="position:absolute;left:76px;top:18px" width="24" height="24" viewBox="0 0 24 24"><path d="M1 2.5 H23 M1 9 H23 M1 15.5 H23 M1 22 H23" stroke="#dfe1e5" stroke-width="2"/></svg><div style="position:absolute;left:139px;top:15px;width:30px;height:30px;border-radius:6px;background:linear-gradient(45deg,#a855d6,#b94fb0 50%,#d0549e)"></div><div class="ui" style="position:absolute;left:139px;top:15px;width:30px;font-size:19.5px;line-height:31px;text-align:center;color:#fff;letter-spacing:0.3px">JD</div><div class="ui" style="position:absolute;left:178px;top:18px;font-size:20.3px;line-height:28px;color:#dfe1e5">jdbc-des</div><svg style="position:absolute;left:263px;top:26px" width="14" height="10" viewBox="0 0 14 10"><path d="M1.5 1.8 L7 7.6 L12.5 1.8" fill="none" stroke="#dfe1e5" stroke-width="1.6"/></svg><div class="ui" style="position:absolute;left:321px;top:17px;font-size:17.75px;line-height:28px;color:#dfe1e5">版本控制</div><svg style="position:absolute;left:401px;top:26px" width="14" height="10" viewBox="0 0 14 10"><path d="M1.5 1.8 L7 7.6 L12.5 1.8" fill="none" stroke="#dfe1e5" stroke-width="1.6"/></svg><div class="ui" style="position:absolute;left:1764px;top:17px;font-size:17.75px;line-height:28px;color:#dfe1e5">当前文件</div><svg style="position:absolute;left:1843px;top:26px" width="16" height="10" viewBox="0 0 16 10"><path d="M1.5 1.8 L7 7.6 L12.5 1.8" fill="none" stroke="#dfe1e5" stroke-width="1.6"/></svg><svg style="position:absolute;left:1889px;top:18px" width="24" height="24" viewBox="0 0 24 24"><path d="M5 3.5 L20.5 12 L5 20.5 Z" fill="none" stroke="#6f737a" stroke-width="2" stroke-linejoin="round"/></svg><svg style="position:absolute;left:1939px;top:17px" width="26" height="26" viewBox="0 0 26 26"><ellipse cx="13" cy="15" rx="5.2" ry="7" fill="none" stroke="#6f737a" stroke-width="2"/><path d="M9.5 8.5 Q13 3 16.5 8.5 M2 15 H7.8 M18.2 15 H24 M3.5 8 L8.3 11 M22.5 8 L17.7 11 M3.5 22 L8.3 19 M22.5 22 L17.7 19" fill="none" stroke="#6f737a" stroke-width="2"/></svg><div style="position:absolute;left:1980px;top:7px;width:45px;height:45px;border-radius:8px;background:#c94f4f"></div><div style="position:absolute;left:1992px;top:19px;width:21px;height:21px;border-radius:3px;border:2.2px solid #f0e6e6"></div><svg style="position:absolute;left:2048px;top:18px" width="10" height="24" viewBox="0 0 10 24"><circle cx="5" cy="4" r="2" fill="#ced0d6"/><circle cx="5" cy="12" r="2" fill="#ced0d6"/><circle cx="5" cy="20" r="2" fill="#ced0d6"/></svg><svg style="position:absolute;left:2120px;top:17px" width="27" height="27" viewBox="0 0 27 27"><path d="M3 3.5 Q8 0.8 14 2 Q24 4.5 23.8 13 Q23.5 19.5 15 19.5 Q7.5 19.5 7.5 14.5 Q7.5 11.5 11.5 12" fill="none" stroke="#ced0d6" stroke-width="2.1" stroke-linecap="round"/><path d="M23 22.5 Q18 25 12.5 24.8 Q1.5 24 1.5 14.5 Q1.8 7 10.5 7.2 Q18.5 7.5 18.5 12 Q18.3 14.5 14.5 14.2" fill="none" stroke="#ced0d6" stroke-width="2.1" stroke-linecap="round"/></svg><svg style="position:absolute;left:2181px;top:16px" width="28" height="30" viewBox="0 0 28 30"><circle cx="12" cy="6.5" r="5" fill="none" stroke="#ced0d6" stroke-width="2"/><path d="M1.5 25.5 Q2 16.5 12 16.5 Q15 16.5 17 17.5 M1.5 25.5 H12 M21 16 V29 M14.5 22.5 H27.5" fill="none" stroke="#ced0d6" stroke-width="2"/></svg><svg style="position:absolute;left:2240px;top:17px" width="27" height="27" viewBox="0 0 27 27"><circle cx="11.2" cy="11" r="9.6" fill="none" stroke="#ced0d6" stroke-width="2"/><path d="M18 18 L25.5 25.5" stroke="#ced0d6" stroke-width="2.2"/></svg><svg style="position:absolute;left:2299px;top:16px" width="32" height="30" viewBox="0 0 32 30"><path d="M22.40 13.90 L22.44 14.50 L22.58 15.13 L22.85 15.82 L24.16 16.87 L24.49 17.79 L24.45 18.64 L24.20 19.43 L23.79 20.14 L23.23 20.75 L22.51 21.21 L21.55 21.39 L19.99 20.78 L19.26 20.89 L18.64 21.08 L18.10 21.35 L17.60 21.69 L17.12 22.12 L16.66 22.70 L16.41 24.36 L15.77 25.10 L15.02 25.49 L14.21 25.68 L13.39 25.68 L12.58 25.49 L11.83 25.10 L11.19 24.36 L10.94 22.70 L10.48 22.12 L10.00 21.69 L9.50 21.35 L8.96 21.08 L8.34 20.89 L7.61 20.78 L6.05 21.39 L5.09 21.21 L4.37 20.75 L3.81 20.14 L3.40 19.43 L3.15 18.64 L3.11 17.79 L3.44 16.87 L4.75 15.82 L5.02 15.13 L5.16 14.50 L5.20 13.90 L5.16 13.30 L5.02 12.67 L4.75 11.98 L3.44 10.93 L3.11 10.01 L3.15 9.16 L3.40 8.37 L3.81 7.66 L4.37 7.05 L5.09 6.59 L6.05 6.41 L7.61 7.02 L8.34 6.91 L8.96 6.72 L9.50 6.45 L10.00 6.11 L10.48 5.68 L10.94 5.10 L11.19 3.44 L11.83 2.70 L12.58 2.31 L13.39 2.12 L14.21 2.12 L15.02 2.31 L15.77 2.70 L16.41 3.44 L16.66 5.10 L17.12 5.68 L17.60 6.11 L18.10 6.45 L18.64 6.72 L19.26 6.91 L19.99 7.02 L21.55 6.41 L22.51 6.59 L23.23 7.05 L23.79 7.66 L24.20 8.37 L24.45 9.16 L24.49 10.01 L24.16 10.93 L22.85 11.98 L22.58 12.67 L22.44 13.30 Z" fill="none" stroke="#ced0d6" stroke-width="2" stroke-linejoin="round"/><circle cx="13.8" cy="13.9" r="3.7" fill="none" stroke="#ced0d6" stroke-width="2"/><circle cx="23.7" cy="4.3" r="7.3" fill="#2b2d30"/><circle cx="23.7" cy="4.3" r="5.4" fill="#f2c55c"/></svg><div style="position:absolute;left:2376px;top:28px;width:16px;height:2px;background:#dfe1e5"></div><svg style="position:absolute;left:2445px;top:21px" width="17" height="17" viewBox="0 0 17 17"><rect x="1" y="5" width="10.5" height="10.5" rx="2" fill="none" stroke="#dfe1e5" stroke-width="1.5"/><path d="M5 1.5 H13 Q15.5 1.5 15.5 4 V12" fill="none" stroke="#dfe1e5" stroke-width="1.5"/></svg><svg style="position:absolute;left:2516px;top:21px" width="17" height="17" viewBox="0 0 17 17"><path d="M1.5 1.5 L15.5 15.5 M15.5 1.5 L1.5 15.5" stroke="#dfe1e5" stroke-width="1.6"/></svg><div style="position:absolute;left:8px;top:69px;width:44px;height:44px;border-radius:8px;background:#4a4b4f"></div><svg style="position:absolute;left:16px;top:78px" width="28" height="25" viewBox="0 0 28 25"><path d="M2.5 5 Q2.5 2.5 5 2.5 H11 L14 5.5 H23 Q25.5 5.5 25.5 8 V20 Q25.5 22.5 23 22.5 H5 Q2.5 22.5 2.5 20 Z" fill="none" stroke="#dfe1e5" stroke-width="2" stroke-linejoin="round"/></svg><div style="position:absolute;left:12px;top:129px;width:36px;height:1px;background:#43454a"></div><svg style="position:absolute;left:17px;top:153px" width="26" height="30" viewBox="0 0 26 30"><path d="M1.5 1 V28" stroke="#dfe1e5" stroke-width="2"/><path d="M1.5 6.5 H6 M1.5 22 H6" stroke="#dfe1e5" stroke-width="2"/><rect x="6" y="1.5" width="18.5" height="10.5" rx="3" fill="none" stroke="#dfe1e5" stroke-width="2"/><rect x="6" y="17" width="18.5" height="10.5" rx="3" fill="none" stroke="#dfe1e5" stroke-width="2"/></svg><svg style="position:absolute;left:16px;top:223px" width="28" height="10" viewBox="0 0 28 10"><circle cx="4" cy="5" r="2.3" fill="#dfe1e5"/><circle cx="14" cy="5" r="2.3" fill="#dfe1e5"/><circle cx="24" cy="5" r="2.3" fill="#dfe1e5"/></svg><div style="position:absolute;left:8px;top:951px;width:45px;height:45px;border-radius:8px;background:#4a4b4f"></div><svg style="position:absolute;left:15px;top:958px" width="32" height="30" viewBox="0 0 32 30"><ellipse cx="15.5" cy="18.5" rx="7.2" ry="8.3" fill="none" stroke="#dfe1e5" stroke-width="2"/><path d="M10.8 10.5 Q10.8 3.8 15.5 3.8 Q20.2 3.8 20.2 10.5 M1 17.5 H8.2 M22.8 17.5 H30 M2.8 9.5 L8.6 12.8 M28.2 9.5 L22.4 12.8 M2.8 25.5 L8.6 22.2 M28.2 25.5 L22.4 22.2" fill="none" stroke="#dfe1e5" stroke-width="2"/><circle cx="24.7" cy="5.7" r="7" fill="#4a4b4f"/><circle cx="24.7" cy="5.7" r="5.3" fill="#5fb865"/></svg><svg style="position:absolute;left:18px;top:1021px" width="26" height="27" viewBox="0 0 26 27"><path d="M3.5 3 Q3.5 1.5 5 2.3 L22 12 Q23.5 13.5 22 14.8 L5 24.7 Q3.5 25.5 3.5 24 Z" fill="none" stroke="#dfe1e5" stroke-width="2" stroke-linejoin="round"/></svg><svg style="position:absolute;left:16px;top:1079px" width="28" height="30" viewBox="0 0 28 30"><path d="M2 3 H12 Q20 2 25 8 L26 11 Q22 6 17 7 V9 H10 V7 H2 Z M10.5 9 V28 H16.5 V9" fill="none" stroke="#dfe1e5" stroke-width="2" stroke-linejoin="round"/></svg><svg style="position:absolute;left:16px;top:1141px" width="28" height="28" viewBox="0 0 28 28"><path d="M14 1.5 L24.5 6.5 L27 17.5 L20 26.5 H8 L1 17.5 L3.5 6.5 Z" fill="none" stroke="#dfe1e5" stroke-width="2" stroke-linejoin="round"/><circle cx="14" cy="14.5" r="6" fill="none" stroke="#dfe1e5" stroke-width="1.6"/><path d="M14 6 V23 M6 14.5 H22 M8.5 9 L19.5 20 M19.5 9 L8.5 20" stroke="#dfe1e5" stroke-width="1.4"/></svg><svg style="position:absolute;left:17px;top:1202px" width="26" height="24" viewBox="0 0 26 24"><rect x="2" y="2" width="22" height="8" rx="1.5" fill="none" stroke="#dfe1e5" stroke-width="2"/><rect x="2" y="14" width="22" height="8" rx="1.5" fill="none" stroke="#dfe1e5" stroke-width="2"/><path d="M6 6 H12 M6 18 H12" stroke="#dfe1e5" stroke-width="2"/></svg><svg style="position:absolute;left:15px;top:1260px" width="30" height="28" viewBox="0 0 30 28"><path d="M8 2 H22 L29 14 L22 26 H8 L1 14 Z" fill="none" stroke="#dfe1e5" stroke-width="2" stroke-linejoin="round"/><path d="M11.5 8.5 L20 14 L11.5 19.5 Z" fill="none" stroke="#dfe1e5" stroke-width="2" stroke-linejoin="round"/></svg><svg style="position:absolute;left:16px;top:1320px" width="28" height="26" viewBox="0 0 28 26"><rect x="1.5" y="1.5" width="25" height="23" rx="2.5" fill="none" stroke="#dfe1e5" stroke-width="2"/><path d="M6 8 L11 12 L6 16 M13 18 H21" fill="none" stroke="#dfe1e5" stroke-width="2"/></svg><svg style="position:absolute;left:16px;top:1379px" width="28" height="28" viewBox="0 0 28 28"><circle cx="14" cy="14" r="12" fill="none" stroke="#dfe1e5" stroke-width="2"/><path d="M14 7 V16" stroke="#dfe1e5" stroke-width="2.4"/><circle cx="14" cy="20.5" r="1.6" fill="#dfe1e5"/></svg><svg style="position:absolute;left:17px;top:1438px" width="26" height="30" viewBox="0 0 26 30"><circle cx="6" cy="6" r="4" fill="none" stroke="#dfe1e5" stroke-width="2"/><circle cx="20" cy="13" r="4" fill="none" stroke="#dfe1e5" stroke-width="2"/><path d="M6 10 V28 M6 23 Q6 17 16 15" fill="none" stroke="#dfe1e5" stroke-width="2"/></svg><svg style="position:absolute;left:2516px;top:72px" width="32" height="36" viewBox="0 0 32 36"><path d="M3.6 27.6 Q7.2 23.5 7.2 17 V14.5 Q7.4 6.8 14.8 6.8 Q22.2 6.8 22.4 14.5 V17 Q22.4 23.5 26 27.6 Z" fill="none" stroke="#dfe1e5" stroke-width="2" stroke-linejoin="round"/><path d="M12.3 30.2 H17.3 L14.8 32.8 Z" fill="#dfe1e5"/><circle cx="24.2" cy="9.7" r="7" fill="#2b2d30"/><circle cx="24.2" cy="9.7" r="5.3" fill="#e55b5b"/></svg><svg style="position:absolute;left:2517px;top:138px" width="30" height="30" viewBox="0 0 30 30"><path d="M4 19 Q1 14 4 9 Q8 2 16 3 Q23 4 26 10 M7 17 Q5 13 8 10 Q11 6 16 7 Q20 8 22 10 M10 15 Q10 11 14 11" fill="none" stroke="#dfe1e5" stroke-width="2" stroke-linecap="round"/><path d="M13 16 Q13 14 15 14 H26 Q28 14 28 16 V23 Q28 25 26 25 V28 L22 25 H15 Q13 25 13 23 Z" fill="none" stroke="#dfe1e5" stroke-width="2" stroke-linejoin="round"/></svg><svg style="position:absolute;left:2517px;top:197px" width="28" height="30" viewBox="0 0 28 30"><ellipse cx="14" cy="6" rx="11" ry="4.5" fill="none" stroke="#dfe1e5" stroke-width="2"/><path d="M3 6 V24 Q3 28.5 14 28.5 Q25 28.5 25 24 V6 M3 12 Q3 16.5 14 16.5 Q25 16.5 25 12 M3 18 Q3 22.5 14 22.5 Q25 22.5 25 18" fill="none" stroke="#dfe1e5" stroke-width="2"/></svg><div style="position:absolute;left:2515px;top:252px;font-family:'Liberation Sans',sans-serif;font-style:italic;font-size:34px;line-height:34px;color:#dfe1e5">m</div><div class="ui" style="position:absolute;left:80px;top:1457px;font-size:18px;line-height:28px;font-weight:bold;color:#dfe1e5">调试</div><svg style="position:absolute;left:158px;top:1455px" width="26" height="28" viewBox="0 0 26 28"><path d="M12 11.5 Q3 11 1.8 17.5 Q1.2 23.5 8 24 Q14 24 18.5 20 L19 11.5 Z" fill="#263a27" stroke="#5fad65" stroke-width="1.8" stroke-linejoin="round"/><circle cx="19" cy="7" r="4.6" fill="#5fb865"/><circle cx="18.3" cy="21.6" r="6.2" fill="#2b2d30"/><circle cx="18.3" cy="21.6" r="4.4" fill="#43454a"/><path d="M18.3 16.5 V21.5 M15.2 18.6 A4.4 4.4 0 1 0 21.4 18.6" fill="none" stroke="#ced0d6" stroke-width="1.6"/></svg><div class="ui" style="position:absolute;left:188px;top:1457px;font-size:19.6px;line-height:28px;color:#dfe1e5">JdbcDesApplication</div><svg style="position:absolute;left:377px;top:1465px" width="14" height="14" viewBox="0 0 14 14"><path d="M2 2 L12 12 M12 2 L2 12" stroke="#6f737a" stroke-width="1.5"/></svg><div style="position:absolute;left:21px;top:1499px;width:12px;height:12px;border:2px solid #548af7;border-radius:2.5px"></div><div class="ui" style="position:absolute;left:39px;top:1492px;font-size:19.7px;line-height:28px;color:#a8adb5">mysql-connector-java-8.0.19.jar</div><div class="ui" style="position:absolute;left:350px;top:1492px;font-size:19.7px;line-height:28px;color:#a8adb5">com</div><div class="ui" style="position:absolute;left:423px;top:1492px;font-size:19.7px;line-height:28px;color:#a8adb5">mysql</div><div class="ui" style="position:absolute;left:513px;top:1492px;font-size:19.7px;line-height:28px;color:#a8adb5">cj</div><div class="ui" style="position:absolute;left:563px;top:1492px;font-size:19.7px;line-height:28px;color:#a8adb5">jdbc</div><div class="ui" style="position:absolute;left:638px;top:1492px;font-size:19.7px;line-height:28px;color:#a8adb5">result</div><div class="ui" style="position:absolute;left:752px;top:1492px;font-size:19.7px;line-height:28px;color:#a8adb5">ResultSetImpl</div><div class="ui" style="position:absolute;left:938px;top:1492px;font-size:19.7px;line-height:28px;color:#a8adb5">getObject</div><svg style="position:absolute;left:329px;top:1499px" width="10" height="14" viewBox="0 0 10 14"><path d="M1.8 1.5 L7.6 7 L1.8 12.5" fill="none" stroke="#a8adb5" stroke-width="1.6"/></svg><svg style="position:absolute;left:402px;top:1499px" width="10" height="14" viewBox="0 0 10 14"><path d="M1.8 1.5 L7.6 7 L1.8 12.5" fill="none" stroke="#a8adb5" stroke-width="1.6"/></svg><svg style="position:absolute;left:491px;top:1499px" width="10" height="14" viewBox="0 0 10 14"><path d="M1.8 1.5 L7.6 7 L1.8 12.5" fill="none" stroke="#a8adb5" stroke-width="1.6"/></svg><svg style="position:absolute;left:543px;top:1499px" width="10" height="14" viewBox="0 0 10 14"><path d="M1.8 1.5 L7.6 7 L1.8 12.5" fill="none" stroke="#a8adb5" stroke-width="1.6"/></svg><svg style="position:absolute;left:618px;top:1499px" width="10" height="14" viewBox="0 0 10 14"><path d="M1.8 1.5 L7.6 7 L1.8 12.5" fill="none" stroke="#a8adb5" stroke-width="1.6"/></svg><svg style="position:absolute;left:701px;top:1499px" width="10" height="14" viewBox="0 0 10 14"><path d="M1.8 1.5 L7.6 7 L1.8 12.5" fill="none" stroke="#a8adb5" stroke-width="1.6"/></svg><svg style="position:absolute;left:888px;top:1499px" width="10" height="14" viewBox="0 0 10 14"><path d="M1.8 1.5 L7.6 7 L1.8 12.5" fill="none" stroke="#a8adb5" stroke-width="1.6"/></svg><svg style="position:absolute;left:723px;top:1495px" width="22" height="22" viewBox="0 0 22 22"><circle cx="11" cy="11" r="9.5" fill="#25324d" stroke="#548af7" stroke-width="1.9"/><path d="M15 8.6 A4.6 4.6 0 1 0 15 13.4" fill="none" stroke="#548af7" stroke-width="1.7"/></svg><svg style="position:absolute;left:909px;top:1495px" width="22" height="22" viewBox="0 0 22 22"><circle cx="11" cy="11" r="9.5" fill="#3f2328" stroke="#e55b5b" stroke-width="1.9"/><path d="M6.5 15 V9.5 Q6.5 7.5 8.8 7.5 Q11 7.5 11 9.5 V15 M11 9.5 Q11 7.5 13.2 7.5 Q15.5 7.5 15.5 9.5 V15" fill="none" stroke="#e55b5b" stroke-width="1.6"/></svg><div class="ui" style="position:absolute;left:2163px;top:1492px;font-size:19px;line-height:28px;color:#a8adb5">1091:35 (12 <span style="font-size:17.5px">字符</span>)</div><div class="ui" style="position:absolute;left:2338px;top:1492px;font-size:19px;line-height:28px;color:#6f737a">LF</div><div class="ui" style="position:absolute;left:2381px;top:1492px;font-size:19px;line-height:28px;color:#a8adb5">UTF-8</div><div class="ui" style="position:absolute;left:2462px;top:1492px;font-size:19px;line-height:28px;color:#a8adb5">4 <span style="font-size:17.5px">个空格</span></div></body></html>
